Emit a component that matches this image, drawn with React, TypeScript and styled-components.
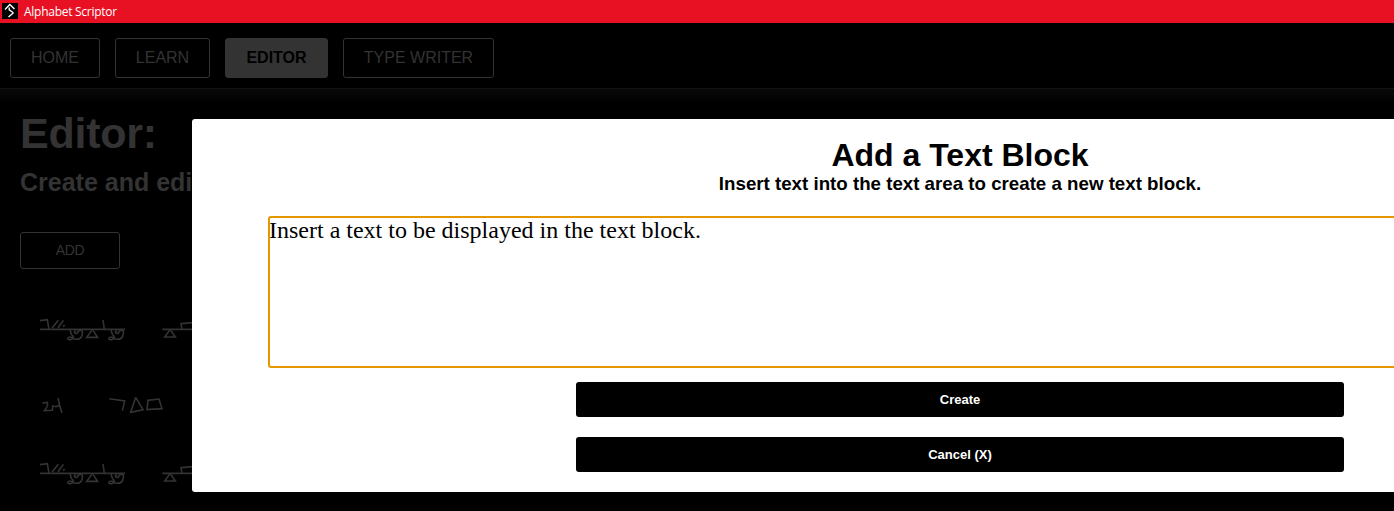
import React from "react";
import styled, { createGlobalStyle } from "styled-components";

const GlobalStyle = createGlobalStyle`
  * { box-sizing: border-box; }
  html, body { margin: 0; background: #000; overflow: hidden; }
  body { font-family: "Liberation Sans", Arial, sans-serif; }
  h1, h2, p { margin: 0; }
`;

const Window = styled.div`
  position: relative;
  width: 100%;
  height: 511px;
  overflow: hidden;
  background: #000;
`;

const TitleBar = styled.header`
  display: flex;
  align-items: center;
  gap: 6px;
  height: 23px;
  padding: 0 0 1px 2px;
  background: #e81123;
  color: #fff;
`;

const AppName = styled.span`
  padding-top: 2px;
  font: 12px/16px "Open Sans", "Noto Sans", sans-serif;
  letter-spacing: -0.27px;
`;

const AppIcon = styled.svg`
  display: block;
  width: 16px;
  height: 16px;
  background: #000;
`;

const Nav = styled.nav`
  display: flex;
  gap: 15px;
  height: 66px;
  padding: 15px 10px 0;
  border-bottom: 1px solid #141414;
`;

const NavButton = styled.button<{ $width: number; $active?: boolean }>`
  width: ${(p) => p.$width}px;
  height: 40px;
  padding: 0;
  border: 1px solid #333;
  border-radius: 3px;
  background: ${(p) => (p.$active ? "#333" : "#000")};
  color: ${(p) => (p.$active ? "#000" : "#333")};
  font: ${(p) => (p.$active ? "bold" : "normal")} 16px/18px "Liberation Sans", Arial, sans-serif;
`;

const Page = styled.main`
  padding: 19px 20px 0;
  background: linear-gradient(#090909, #000 14px);
  color: #333;
`;

const PageTitle = styled.h1`
  font-size: 43px;
  line-height: 50px;
  letter-spacing: -0.25px;
`;

const PageSubtitle = styled.h2`
  margin-top: 9px;
  font-size: 25px;
  line-height: 30px;
  white-space: nowrap;
`;

const AddButton = styled.button`
  display: block;
  width: 100px;
  height: 37px;
  margin-top: 35px;
  padding: 0 0 2px;
  border: 1px solid #333;
  border-radius: 3px;
  background: #000;
  color: #333;
  font: 14px/16px "Liberation Sans", Arial, sans-serif;
  letter-spacing: -0.3px;
`;

const Blocks = styled.div`
  display: flex;
  flex-direction: column;
  gap: 22px;
  margin: 36px 0 0 20px;
`;

const Script = styled.svg`
  display: block;
  width: 180px;
  height: 50px;
  overflow: visible;
  fill: none;
  stroke: #333;
  stroke-width: 4.8;
`;

const Modal = styled.section`
  position: absolute;
  top: 119px;
  left: 192px;
  display: flex;
  flex-direction: column;
  align-items: center;
  width: 1536px;
  height: 373px;
  padding-top: 18px;
  border-radius: 3px;
  background: #fff;
  color: #000;
`;

const ModalTitle = styled.h1`
  font-size: 32px;
  line-height: 36px;
`;

const ModalText = styled.h2`
  font-size: 18.72px;
  line-height: 22px;
`;

const TextArea = styled.textarea`
  display: block;
  width: 1384px;
  height: 152px;
  margin: 21px 0 14px;
  padding: 0;
  border: 2px solid #e59700;
  border-radius: 3px;
  outline: none;
  resize: none;
  background: #fff;
  color: #000;
  text-indent: -1px;
  font: 24px/25px "Liberation Serif", "Times New Roman", serif;
`;

const ModalButton = styled.button`
  width: 768px;
  height: 35px;
  margin-bottom: 20px;
  padding: 0;
  border: 0;
  border-radius: 3px;
  background: #000;
  color: #fff;
  font: bold 13px/15px "Liberation Sans", Arial, sans-serif;
`;

const CURL = "M90 75L94 88Q103 96 98 101Q90 108 83 102Q83 95 94 97L101 101Q119 107 125 94Q131 78 123 76Q114 75 113 83Q107 88 103 82Q104 78 108 76";

const LongLine = () => (
  <Script viewBox="0 0 540 150">
    <path d="M0 73H255M367 73H540M0 47L22 44L27 73M36 69L55 46M54 69L70 46M69 65L74 60M189 45L193 73" />
    <path d={CURL} />
    <path transform="translate(123 0)" d={CURL} />
    <path d="M156 76L140 97H173L159 76M389 76L374 96H406L392 76M426 72L423 56L456 53" />
  </Script>
);

const ShortLine = () => (
  <Script viewBox="0 -24 540 150">
    <path d="M7 54L22 52Q26 62 13 77L37 76L38 63L48 65L58 61M54 39Q58 62 66 84" />
    <path d="M208 41L254 48L247 77M287 37L272 82L309 74L287 37M322 46L357 42L366 71L321 74L324 44" />
  </Script>
);

export default function App() {
  return (
    <Window>
      <GlobalStyle />
      <TitleBar>
        <AppIcon viewBox="0 0 16 16" fill="none" stroke="#fff" strokeWidth="1.35">
          <path d="M3 6.5L7.8 1.5L12.5 6M7.2 4.5V6.8L11 9.5V10.2L6.5 14" />
        </AppIcon>
        <AppName>Alphabet Scriptor</AppName>
      </TitleBar>
      <Nav>
        <NavButton $width={90}>HOME</NavButton>
        <NavButton $width={95}>LEARN</NavButton>
        <NavButton $width={103} $active>EDITOR</NavButton>
        <NavButton $width={151}>TYPE WRITER</NavButton>
      </Nav>
      <Page>
        <PageTitle>Editor:</PageTitle>
        <PageSubtitle>Create and edit</PageSubtitle>
        <AddButton>ADD</AddButton>
        <Blocks>
          <LongLine />
          <ShortLine />
          <LongLine />
        </Blocks>
      </Page>
      <Modal role="dialog">
        <ModalTitle>Add a Text Block</ModalTitle>
        <ModalText>Insert text into the text area to create a new text block.</ModalText>
        <TextArea defaultValue="Insert a text to be displayed in the text block." />
        <ModalButton>Create</ModalButton>
        <ModalButton>Cancel (X)</ModalButton>
      </Modal>
    </Window>
  );
}
